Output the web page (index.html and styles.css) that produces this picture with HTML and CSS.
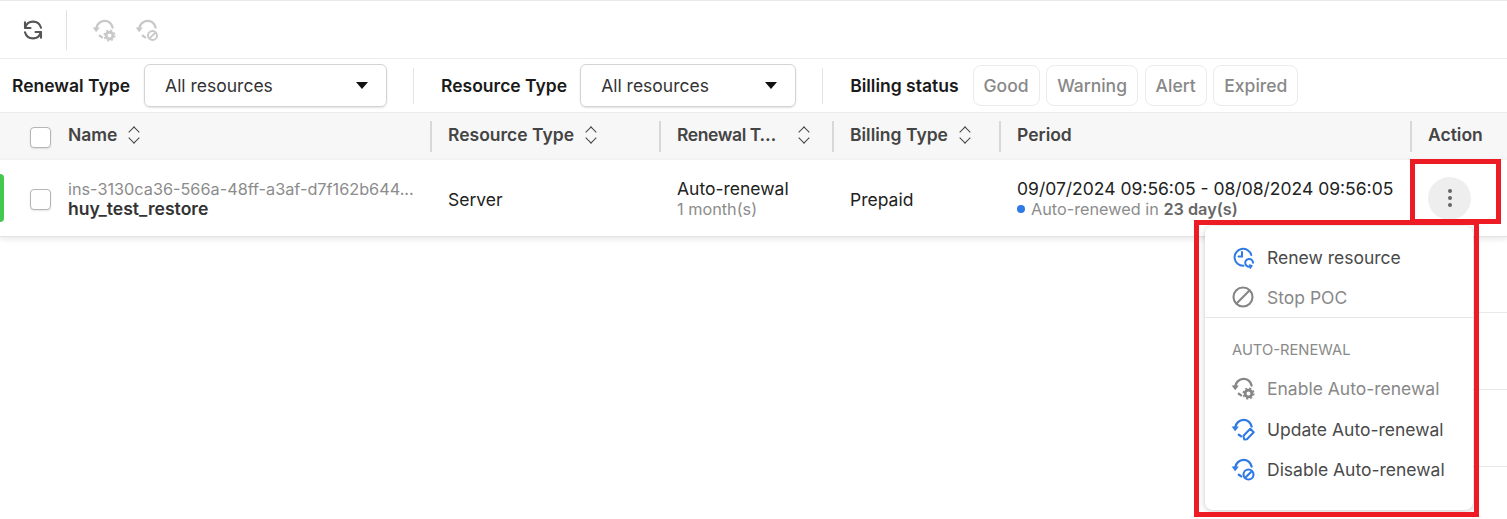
FILE: index.html
```html
<!DOCTYPE html>
<html lang="en">
<head>
    <meta charset="UTF-8">
    <title>Renewal management</title>
    <link rel="stylesheet" href="styles.css">
</head>
<body>
    <svg class="defs" width="0" height="0">
        <symbol id="renew-arc" viewBox="0 0 24 24">
            <path d="M4.200 10.500C4.800 6.300 8.200 2.800 12.400 2.800c4 0 7.200 2.700 8.200 6.700" fill="none" stroke="currentColor" stroke-width="2.300" stroke-linecap="round"/>
            <path d="M0.600 9.500 4.200 14.200l3.600-4.700z" fill="currentColor"/>
            <path d="M7.800 17.800l2.400 1.600" fill="none" stroke="currentColor" stroke-width="2.300" stroke-linecap="round"/>
        </symbol>
        <symbol id="gear-badge" viewBox="0 0 24 24">
            <circle cx="17.500" cy="17.500" r="6.800" fill="#fff"/>
            <circle cx="17.500" cy="17.500" r="3.400" fill="none" stroke="currentColor" stroke-width="2.800"/>
            <circle cx="17.500" cy="17.500" r="5.400" fill="none" stroke="currentColor" stroke-width="1.300" stroke-dasharray="2.200 2.040"/>
        </symbol>
    </svg>

    <header class="toolbar">
        <button class="tool-btn">
            <svg width="22" height="22" viewBox="0 0 22 22" fill="none" stroke="#555" stroke-width="2.100" stroke-linecap="round" stroke-linejoin="round">
                <path d="M3.200 8.800C4.200 5 7.200 2.600 11 2.600c3.900 0 7 2.600 8 6.200"/>
                <path d="M3 3.300v5.700h5.500"/>
                <path d="M18.800 13.200c-1 3.800-4 6.200-7.800 6.200-3.900 0-7-2.600-8-6.200"/>
                <path d="M19 18.700V13h-5.500"/>
            </svg>
        </button>
        <span class="toolbar-sep"></span>
        <div class="tool-icon tool-icon-first">
            <svg width="24" height="24" class="ico-muted"><use href="#renew-arc"/><use href="#gear-badge"/></svg>
        </div>
        <div class="tool-icon">
            <svg width="24" height="24" class="ico-muted"><use href="#renew-arc"/><circle cx="17.500" cy="17.500" r="4.500" fill="#fff" stroke="currentColor" stroke-width="1.900"/><path d="M14.600 20.400l5.800-5.800" stroke="currentColor" stroke-width="1.900"/></svg>
        </div>
    </header>

    <section class="filters">
        <label class="filter-label">Renewal Type</label>
        <div class="select select-renewal">All resources<span class="caret"></span></div>
        <span class="filter-sep"></span>
        <label class="filter-label">Resource Type</label>
        <div class="select select-resource">All resources<span class="caret"></span></div>
        <span class="filter-sep sep-billing"></span>
        <label class="filter-label">Billing status</label>
        <div class="chips">
            <span class="chip">Good</span>
            <span class="chip">Warning</span>
            <span class="chip">Alert</span>
            <span class="chip">Expired</span>
        </div>
    </section>

    <section class="table">
        <div class="table-head">
            <div class="th th-name"><span class="check"></span>Name<span class="sort"></span></div>
            <div class="th">Resource Type<span class="sort"></span></div>
            <div class="th th-clipped">Renewal T…<span class="sort sort-far"></span></div>
            <div class="th">Billing Type<span class="sort"></span></div>
            <div class="th">Period</div>
            <div class="th">Action</div>
        </div>
        <div class="table-row">
            <span class="status-tab"></span>
            <div class="td td-name">
                <span class="check"></span>
                <div>
                    <div class="sub sub-id">ins-3130ca36-566a-48ff-a3af-d7f162b644...</div>
                    <div class="res-name">huy_test_restore</div>
                </div>
            </div>
            <div class="td">Server</div>
            <div class="td">
                <div>
                    <div class="line">Auto-renewal</div>
                    <div class="sub">1 month(s)</div>
                </div>
            </div>
            <div class="td">Prepaid</div>
            <div class="td">
                <div>
                    <div class="line">09/07/2024 09:56:05 - 08/08/2024 09:56:05</div>
                    <div class="sub sub-period"><span class="dot"></span>Auto-renewed in <b>23 day(s)</b></div>
                </div>
            </div>
            <div class="td td-action">
                <button class="more-btn"><span></span><span></span><span></span></button>
            </div>
        </div>
    </section>

    <!-- rows behind the menu -->
    <div class="ghost-line line-1"></div>
    <div class="ghost-line line-2"></div>
    <div class="ghost-line line-3"></div>

    <div class="menu">
        <div class="menu-item">
            <svg width="24" height="24" class="ico-blue" fill="none" stroke="currentColor" stroke-width="2" stroke-linecap="round">
                <path d="M12.500 20.800A8.500 8.500 0 1 1 20.300 10"/>
                <path d="M11 7v4.500H7.500"/>
                <path d="M22 17.800a3.900 3.900 0 1 0-2 3.400"/>
                <path d="M19.300 23.100l1.500-2.300-2.300-.8" stroke-width="1.500"/>
            </svg>
            Renew resource
        </div>
        <div class="menu-item disabled">
            <svg width="24" height="24" class="ico-gray" fill="none" stroke="currentColor" stroke-width="2.100">
                <circle cx="12" cy="12" r="9.500"/>
                <path d="M5.300 18.700 18.700 5.300"/>
            </svg>
            Stop POC
        </div>
        <div class="menu-divider"></div>
        <div class="menu-label">AUTO-RENEWAL</div>
        <div class="menu-item disabled">
            <svg width="24" height="24" class="ico-gray"><use href="#renew-arc"/><use href="#gear-badge"/></svg>
            Enable Auto-renewal
        </div>
        <div class="menu-item menu-item-gap">
            <svg width="24" height="24" class="ico-blue"><use href="#renew-arc"/><path d="M13.200 22.600l-.7-3.800 6.800-7 3.400 3.400-6.800 7z" fill="#fff" stroke="currentColor" stroke-width="2" stroke-linejoin="round"/></svg>
            Update Auto-renewal
        </div>
        <div class="menu-item">
            <svg width="24" height="24" class="ico-blue"><use href="#renew-arc"/><circle cx="17.500" cy="17.500" r="5" fill="#fff" stroke="currentColor" stroke-width="2.100"/><path d="M14.200 20.800l6.600-6.600" stroke="currentColor" stroke-width="2.100"/></svg>
            Disable Auto-renewal
        </div>
    </div>

    <div class="callout callout-action"></div>
    <div class="callout callout-menu"></div>
</body>
</html>
```

FILE: styles.css
```css
* {
    box-sizing: border-box;
}

body {
    margin: 0;
    height: 519px;
    overflow: hidden;
    position: relative;
    background: #fff;
    color: #222;
    font-family: Inter, "Noto Sans", sans-serif;
    font-size: 17.500px;
}

.defs {
    position: absolute;
}

/* toolbar */
.toolbar {
    height: 59px;
    border-top: 1px solid #e8e8e8;
    border-bottom: 1px solid #ececec;
    display: flex;
    align-items: center;
    padding-left: 22px;
}

.tool-btn {
    background: none;
    border: none;
    padding: 0;
    width: 22px;
    height: 22px;
    display: flex;
}

.toolbar-sep {
    width: 1px;
    height: 40px;
    background: #e0e0e0;
    margin-left: 22px;
}

.tool-icon {
    width: 24px;
    height: 24px;
    margin-left: 19px;
}

.tool-icon-first {
    margin-left: 25px;
}

.ico-muted { color: #c8c8c8; }
.ico-gray { color: #858585; }
.ico-blue { color: #2f7ae5; }

/* filters */
.filters {
    height: 54px;
    display: flex;
    align-items: center;
    padding-left: 12px;
    border-bottom: 1px solid #ececec;
}

.filter-label {
    font-weight: 600;
    color: #1a1a1a;
}

.select {
    height: 43px;
    margin-left: 13px;
    padding-left: 20px;
    border: 1px solid #d4d4d4;
    border-radius: 6px;
    box-shadow: 0 1px 2px rgba(0, 0, 0, 0.12);
    display: flex;
    align-items: center;
    justify-content: space-between;
    color: #333;
}

.select-renewal {
    width: 243px;
    margin-left: 14px;
}

.select-resource {
    width: 216px;
}

.caret {
    width: 0;
    height: 0;
    margin-right: 18px;
    border-left: 6px solid transparent;
    border-right: 6px solid transparent;
    border-top: 7px solid #111;
}

.filter-sep {
    width: 1px;
    height: 36px;
    background: #e4e4e4;
    margin: 0 27px 0 26px;
}

.chips {
    display: flex;
    gap: 6.600px;
    margin-left: 14px;
}

.chip {
    height: 41px;
    padding: 0 10px;
    display: flex;
    align-items: center;
    border: 1px solid #ebebeb;
    border-radius: 8px;
    color: #888;
    font-weight: 500;
}

/* table */
.table-head,
.table-row {
    display: grid;
    grid-template-columns: 431px 229px 173px 167px 411px 96px;
}

.table-head {
    height: 47px;
    background: #f7f7f7;
}

.th {
    display: flex;
    align-items: center;
    padding-left: 17px;
    padding-bottom: 4px;
    font-weight: 600;
    color: #444;
    position: relative;
}

.th + .th::before {
    content: "";
    position: absolute;
    left: -1px;
    top: 8px;
    bottom: 8px;
    width: 2px;
    background: #d8d8d8;
}

.th-clipped {
    letter-spacing: -0.400px;
}

.th-name,
.td-name {
    padding-left: 30px;
}

.check {
    width: 21px;
    height: 21px;
    margin-right: 17px;
    flex: none;
    background: #fff;
    border: 1px solid #b5b5b5;
    border-radius: 4px;
    box-shadow: 0 1px 2px rgba(0, 0, 0, 0.1);
}

.th .check {
    margin-top: 6px;
}

.sort {
    width: 11px;
    height: 16px;
    margin-left: 11px;
    position: relative;
}

.sort-far {
    margin-left: 22px;
}

.sort::before,
.sort::after {
    content: "";
    position: absolute;
    left: 2px;
    width: 7px;
    height: 7px;
    border-left: 1.500px solid #444;
    border-top: 1.500px solid #444;
}

.sort::before {
    top: 1px;
    transform: rotate(45deg);
}

.sort::after {
    bottom: 1px;
    transform: rotate(225deg);
}

.table-row {
    height: 77px;
    background: #fff;
    border-bottom: 1px solid #e2e2e2;
    box-shadow: 0 2px 6px rgba(0, 0, 0, 0.1);
    position: relative;
}

.status-tab {
    position: absolute;
    left: 0;
    top: 14px;
    width: 4px;
    height: 48px;
    background: #45c84f;
    border-radius: 0 4px 4px 0;
}

.td {
    display: flex;
    align-items: center;
    padding-left: 17px;
    padding-top: 2px;
    color: #222;
}

.td-name {
    padding-left: 30px;
}

.line {
    line-height: 20px;
}

.sub {
    font-size: 16.250px;
    line-height: 20px;
    color: #8c8c8c;
}

.sub-period {
    display: flex;
    align-items: center;
    white-space: pre;
}

.sub-period b {
    font-weight: 600;
    color: #666;
}

.res-name {
    font-size: 17.600px;
    font-weight: 600;
    color: #333;
    line-height: 20px;
}

.dot {
    width: 8px;
    height: 8px;
    border-radius: 50%;
    background: #2f7ae5;
    margin-right: 6px;
}

.td-action {
    padding-top: 0;
}

.more-btn {
    width: 43px;
    height: 43px;
    border: none;
    border-radius: 50%;
    background: #eee;
    display: flex;
    flex-direction: column;
    align-items: center;
    justify-content: center;
    gap: 3px;
    padding: 0;
}

.more-btn span {
    width: 4px;
    height: 4px;
    border-radius: 50%;
    background: #666;
}

/* faint lines of the rows under the menu */
.ghost-line {
    position: absolute;
    left: 1473px;
    right: 0;
    height: 1px;
    background: #e8e8e8;
}

.line-1 { top: 312px; }
.line-2 { top: 389px; }
.line-3 { top: 466px; }

/* action menu */
.menu {
    position: absolute;
    left: 1205px;
    top: 226px;
    width: 268px;
    height: 284px;
    padding-top: 11px;
    background: #fff;
    border-radius: 8px;
    box-shadow: 0 1px 6px rgba(0, 0, 0, 0.22);
}

.menu-item {
    height: 40px;
    padding-left: 26px;
    display: flex;
    align-items: center;
    gap: 12px;
    color: #4a4a4a;
}

.menu-item.disabled {
    color: #888;
}

.menu-item-gap {
    margin-top: 1px;
}

.menu-divider {
    height: 1px;
    background: #e6e6e6;
}

.menu-label {
    height: 50px;
    padding: 14px 0 0 27px;
    display: flex;
    align-items: center;
    font-size: 14.750px;
    color: #8a8a8a;
}

/* red annotation boxes */
.callout {
    position: absolute;
    border: 5px solid #ed1c24;
}

.callout-action {
    left: 1410px;
    top: 159px;
    width: 91px;
    height: 65px;
}

.callout-menu {
    left: 1194px;
    top: 220px;
    width: 285px;
    height: 297px;
}
```
